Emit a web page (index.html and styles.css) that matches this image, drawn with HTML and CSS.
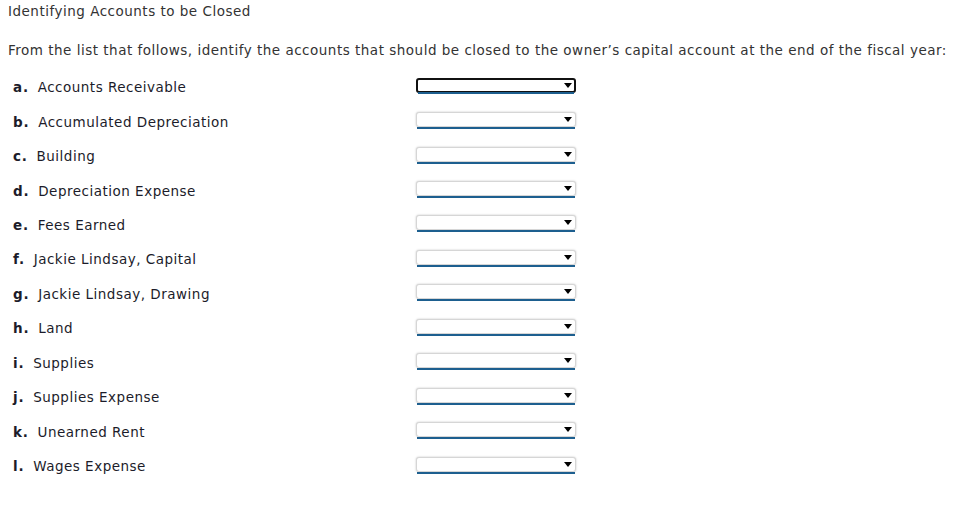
FILE: index.html
```html
<!DOCTYPE html>
<html>
<head>
<meta charset="utf-8">
<link rel="stylesheet" href="styles.css">
</head>
<body>
<div class="page">
  <div class="title">Identifying Accounts to be Closed</div>
  <p class="intro">From the list that follows, identify the accounts that should be closed to the owner’s capital account at the end of the fiscal year:</p>
  <div class="list">
    <div class="row"><div class="label"><b>a.</b> Accounts Receivable</div><div class="select focused"><span class="arrow"></span></div></div>
    <div class="row"><div class="label"><b>b.</b> Accumulated Depreciation</div><div class="select"><span class="arrow"></span></div></div>
    <div class="row"><div class="label"><b>c.</b> Building</div><div class="select"><span class="arrow"></span></div></div>
    <div class="row"><div class="label"><b>d.</b> Depreciation Expense</div><div class="select"><span class="arrow"></span></div></div>
    <div class="row"><div class="label"><b>e.</b> Fees Earned</div><div class="select"><span class="arrow"></span></div></div>
    <div class="row"><div class="label"><b>f.</b> Jackie Lindsay, Capital</div><div class="select"><span class="arrow"></span></div></div>
    <div class="row"><div class="label"><b>g.</b> Jackie Lindsay, Drawing</div><div class="select"><span class="arrow"></span></div></div>
    <div class="row"><div class="label"><b>h.</b> Land</div><div class="select"><span class="arrow"></span></div></div>
    <div class="row"><div class="label"><b>i.</b> Supplies</div><div class="select"><span class="arrow"></span></div></div>
    <div class="row"><div class="label"><b>j.</b> Supplies Expense</div><div class="select"><span class="arrow"></span></div></div>
    <div class="row"><div class="label"><b>k.</b> Unearned Rent</div><div class="select"><span class="arrow"></span></div></div>
    <div class="row"><div class="label"><b>l.</b> Wages Expense</div><div class="select"><span class="arrow"></span></div></div>
  </div>
</div>
</body>
</html>
```
FILE: styles.css
```css
html, body { margin: 0; padding: 0; background: #fff; }
body { font-family: "DejaVu Sans", Verdana, sans-serif; font-size: 13.5px; letter-spacing: 0.5px; color: #222; }
.page { padding: 3px 8px 0 8px; }
.title { line-height: 16px; color: #333; }
.intro { margin: 23px 0 0 0; line-height: 16px; color: #333; }
.list { margin-top: 12px; padding-left: 5px; }
.row { display: flex; align-items: center; height: 34.45px; }
.label { width: 403px; line-height: 16px; color: #1c1c2a; padding-top: 0; }
.label b { margin-right: 4px; letter-spacing: 0.8px; }
.select {
  position: relative;
  width: 160px; height: 15px; box-sizing: border-box;
  margin-bottom: 4px;
  border: 1px solid #d6d6d6; border-radius: 3px;
  box-shadow: 0 0 2px rgba(0,0,0,0.25);
  background: #fff;
}
.select::after {
  content: ""; position: absolute; left: 0; right: 0; bottom: -3px; height: 2px;
  background: #1d5f8f;
}
.select.focused { border: 2px solid #111; box-shadow: none; }
.arrow {
  position: absolute; right: 3px; top: 4px;
  width: 0; height: 0;
  border-left: 4px solid transparent; border-right: 4px solid transparent;
  border-top: 5px solid #000;
}
.select.focused .arrow { right: 2px; top: 3px; }
```
